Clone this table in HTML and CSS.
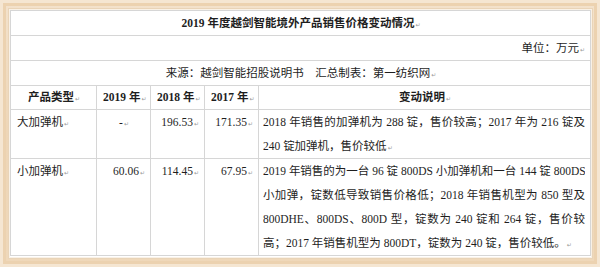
FILE: index.html
```html
<!DOCTYPE html>
<html lang="zh">
<head>
<meta charset="utf-8">
<link rel="stylesheet" href="styles.css">
</head>
<body>
<div class="frame">
  <div class="sheet">
    <table class="tbl">
      <colgroup>
        <col class="c1"><col class="c2"><col class="c3"><col class="c4"><col class="c5">
      </colgroup>
      <tr class="r-title"><td colspan="5" class="center bold">2019 年度越剑智能境外产品销售价格变动情况<span class="pm">↵</span></td></tr>
      <tr class="r-unit"><td colspan="5" class="right">单位：万元<span class="pm">↵</span></td></tr>
      <tr class="r-src"><td colspan="5" class="center">来源：越剑智能招股说明书　汇总制表：第一纺织网<span class="pm">↵</span></td></tr>
      <tr class="r-head">
        <td class="center bold">产品类型<span class="pm">↵</span></td>
        <td class="center bold">2019 年<span class="pm">↵</span></td>
        <td class="center bold">2018 年<span class="pm">↵</span></td>
        <td class="center bold">2017 年<span class="pm">↵</span></td>
        <td class="center bold">变动说明<span class="pm">↵</span></td>
      </tr>
      <tr>
        <td>大加弹机<span class="pm">↵</span></td>
        <td class="center">-<span class="pm">↵</span></td>
        <td class="right">196.53<span class="pm">↵</span></td>
        <td class="right">171.35<span class="pm">↵</span></td>
        <td class="desc">
          <span class="ln">2018 年销售的加弹机为 288 锭，售价较高；2017 年为 216 锭及</span>
          <span class="ln last">240 锭加弹机，售价较低<span class="pm">↵</span></span>
        </td>
      </tr>
      <tr>
        <td>小加弹机<span class="pm">↵</span></td>
        <td class="right">60.06<span class="pm">↵</span></td>
        <td class="right">114.45<span class="pm">↵</span></td>
        <td class="right">67.95<span class="pm">↵</span></td>
        <td class="desc">
          <span class="ln">2019 年销售的为一台 96 锭 800DS 小加弹机和一台 144 锭 800DS</span>
          <span class="ln">小加弹，锭数低导致销售价格低；2018 年销售机型为 850 型及</span>
          <span class="ln">800DHE、800DS、800D 型，锭数为 240 锭和 264 锭，售价较</span>
          <span class="ln last">高；2017 年销售机型为 800DT，锭数为 240 锭，售价较低。<span class="pm">↵</span></span>
        </td>
      </tr>
    </table>
  </div>
</div>
</body>
</html>
```
FILE: styles.css
```css
html, body {
  margin: 0;
  padding: 0;
}
body {
  width: 600px;
  height: 267px;
  overflow: hidden;
  background: #efd9bd;
  font-family: "Liberation Serif", "Noto Sans CJK SC", serif;
  font-size: 11.5px;
  color: #1e1e1e;
}
.frame {
  box-sizing: border-box;
  width: 600px;
  height: 267px;
  padding: 10px 9px 10px 10px;
  background: linear-gradient(180deg, #f3e2cc 0%, #eed6b7 50%, #efd8ba 100%);
  box-shadow: inset 0 0 0 3px #f5e6d2, inset 0 0 0 6px #ecd2b0;
}
.sheet {
  background: #ffffff;
  height: 100%;
  overflow: hidden;
  box-shadow: 0 0 0 1px #f9f1e6, 0 0 0 2px #e9d4b8;
}
.tbl {
  width: 100%;
  border-collapse: collapse;
  table-layout: fixed;
}
.c1 { width: 86px; }
.c2 { width: 54px; }
.c3 { width: 54px; }
.c4 { width: 54px; }
.tbl td {
  border: 1px solid #d6d6d6;
  padding: 0 5px 0 6px;
  height: 24px;
  line-height: 24px;
  vertical-align: top;
  white-space: nowrap;
  overflow: hidden;
}
.tbl .r-head td {
  height: 23px;
  line-height: 23px;
}
.center { text-align: center; }
.right { text-align: right; }
.bold { font-weight: bold; }
.tbl td.desc {
  padding: 0 5px 0 4px;
}
.ln {
  display: block;
  height: 24px;
  line-height: 24px;
  overflow: hidden;
  text-align: justify;
  text-align-last: justify;
}
.ln.last {
  text-align-last: left;
}
.pm {
  font-family: "DejaVu Sans", sans-serif;
  font-size: 6px;
  line-height: 0;
  font-weight: normal;
  color: #9a9a9a;
  margin-left: 1px;
}
```
